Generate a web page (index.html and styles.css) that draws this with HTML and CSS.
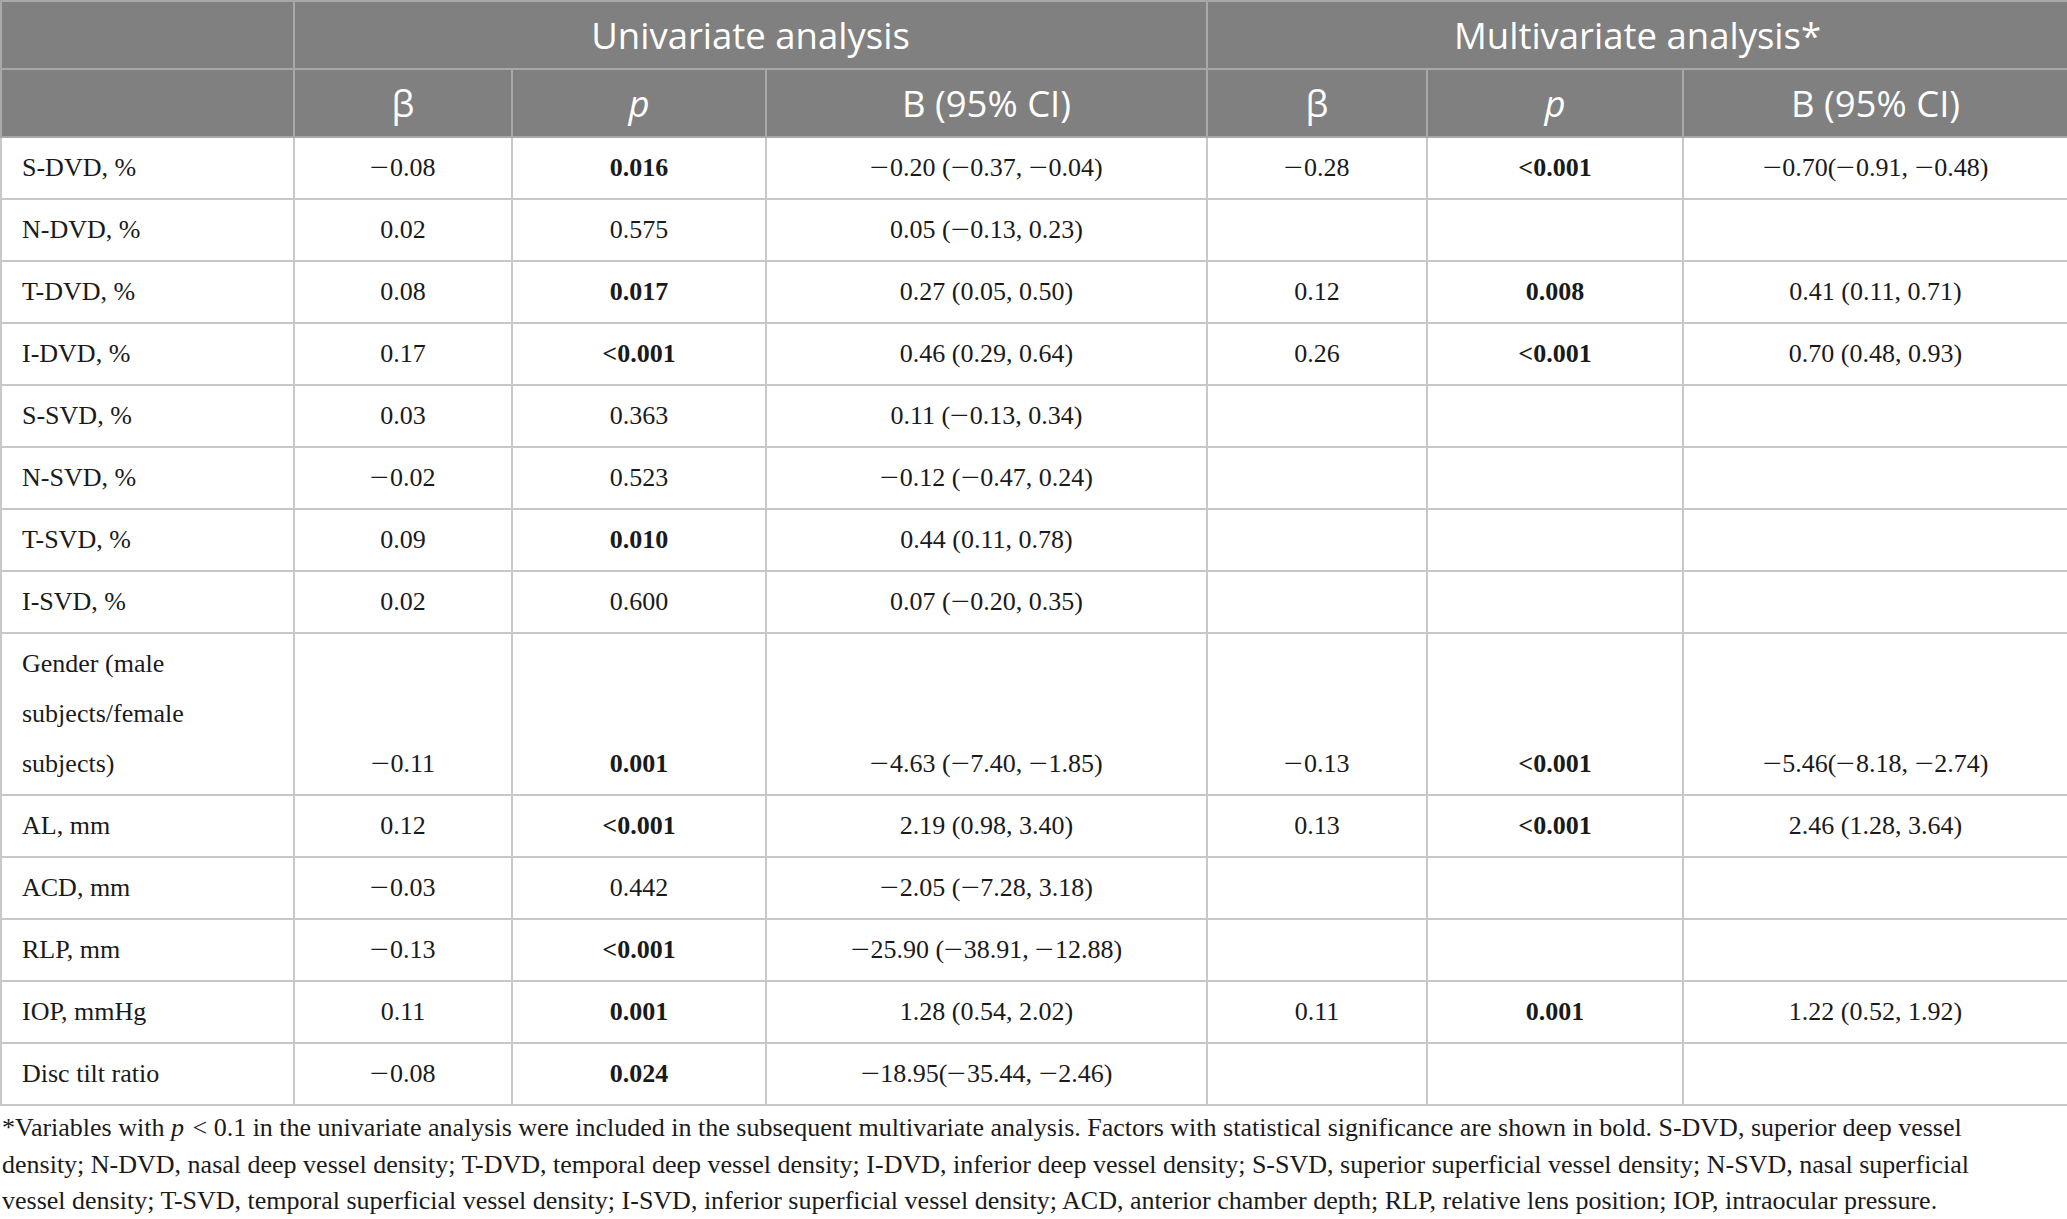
FILE: index.html
```html
<!DOCTYPE html>
<html>
<head>
<meta charset="utf-8">
<link rel="stylesheet" href="styles.css">
</head>
<body>
<table class="data">
  <colgroup>
    <col class="c-var"><col class="c-b1"><col class="c-p1"><col class="c-ci1">
    <col class="c-b2"><col class="c-p2"><col class="c-ci2">
  </colgroup>
  <thead>
    <tr class="h1">
      <th></th>
      <th colspan="3">Univariate analysis</th>
      <th colspan="3">Multivariate analysis*</th>
    </tr>
    <tr class="h2">
      <th></th>
      <th>β</th><th><i>p</i></th><th>B (95% CI)</th>
      <th>β</th><th><i>p</i></th><th>B (95% CI)</th>
    </tr>
  </thead>
  <tbody>
    <tr><td>S-DVD, %</td><td><span class="m">−</span>0.08</td><td><b>0.016</b></td><td><span class="m">−</span>0.20 (<span class="m">−</span>0.37, <span class="m">−</span>0.04)</td><td><span class="m">−</span>0.28</td><td><b>&lt;0.001</b></td><td><span class="m">−</span>0.70(<span class="m">−</span>0.91, <span class="m">−</span>0.48)</td></tr>
    <tr><td>N-DVD, %</td><td>0.02</td><td>0.575</td><td>0.05 (<span class="m">−</span>0.13, 0.23)</td><td></td><td></td><td></td></tr>
    <tr><td>T-DVD, %</td><td>0.08</td><td><b>0.017</b></td><td>0.27 (0.05, 0.50)</td><td>0.12</td><td><b>0.008</b></td><td>0.41 (0.11, 0.71)</td></tr>
    <tr><td>I-DVD, %</td><td>0.17</td><td><b>&lt;0.001</b></td><td>0.46 (0.29, 0.64)</td><td>0.26</td><td><b>&lt;0.001</b></td><td>0.70 (0.48, 0.93)</td></tr>
    <tr><td>S-SVD, %</td><td>0.03</td><td>0.363</td><td>0.11 (<span class="m">−</span>0.13, 0.34)</td><td></td><td></td><td></td></tr>
    <tr><td>N-SVD, %</td><td><span class="m">−</span>0.02</td><td>0.523</td><td><span class="m">−</span>0.12 (<span class="m">−</span>0.47, 0.24)</td><td></td><td></td><td></td></tr>
    <tr><td>T-SVD, %</td><td>0.09</td><td><b>0.010</b></td><td>0.44 (0.11, 0.78)</td><td></td><td></td><td></td></tr>
    <tr><td>I-SVD, %</td><td>0.02</td><td>0.600</td><td>0.07 (<span class="m">−</span>0.20, 0.35)</td><td></td><td></td><td></td></tr>
    <tr><td>Gender (male subjects/female subjects)</td><td><span class="m">−</span>0.11</td><td><b>0.001</b></td><td><span class="m">−</span>4.63 (<span class="m">−</span>7.40, <span class="m">−</span>1.85)</td><td><span class="m">−</span>0.13</td><td><b>&lt;0.001</b></td><td><span class="m">−</span>5.46(<span class="m">−</span>8.18, <span class="m">−</span>2.74)</td></tr>
    <tr><td>AL, mm</td><td>0.12</td><td><b>&lt;0.001</b></td><td>2.19 (0.98, 3.40)</td><td>0.13</td><td><b>&lt;0.001</b></td><td>2.46 (1.28, 3.64)</td></tr>
    <tr><td>ACD, mm</td><td><span class="m">−</span>0.03</td><td>0.442</td><td><span class="m">−</span>2.05 (<span class="m">−</span>7.28, 3.18)</td><td></td><td></td><td></td></tr>
    <tr><td>RLP, mm</td><td><span class="m">−</span>0.13</td><td><b>&lt;0.001</b></td><td><span class="m">−</span>25.90 (<span class="m">−</span>38.91, <span class="m">−</span>12.88)</td><td></td><td></td><td></td></tr>
    <tr><td>IOP, mmHg</td><td>0.11</td><td><b>0.001</b></td><td>1.28 (0.54, 2.02)</td><td>0.11</td><td><b>0.001</b></td><td>1.22 (0.52, 1.92)</td></tr>
    <tr><td>Disc tilt ratio</td><td><span class="m">−</span>0.08</td><td><b>0.024</b></td><td><span class="m">−</span>18.95(<span class="m">−</span>35.44, <span class="m">−</span>2.46)</td><td></td><td></td><td></td></tr>
  </tbody>
</table>
<p class="note">*Variables with <i>p</i> &lt; 0.1 in the univariate analysis were included in the subsequent multivariate analysis. Factors with statistical significance are shown in bold. S-DVD, superior deep vessel density; N-DVD, nasal deep vessel density; T-DVD, temporal deep vessel density; I-DVD, inferior deep vessel density; S-SVD, superior superficial vessel density; N-SVD, nasal superficial vessel density; T-SVD, temporal superficial vessel density; I-SVD, inferior superficial vessel density; ACD, anterior chamber depth; RLP, relative lens position; IOP, intraocular pressure.</p>
</body>
</html>
```
FILE: styles.css
```css
html, body {
  margin: 0;
  padding: 0;
  background: #ffffff;
}

.data {
  width: 2067px;
  border-collapse: collapse;
  table-layout: fixed;
  font-family: "Liberation Serif", "Times New Roman", serif;
  color: #1a1a1a;
}

.c-var { width: 293px; }
.c-b1 { width: 218px; }
.c-p1 { width: 254px; }
.c-ci1 { width: 441px; }
.c-b2 { width: 220px; }
.c-p2 { width: 256px; }
.c-ci2 { width: 385px; }

.data th {
  background: #808080;
  color: #ffffff;
  font-family: "Open Sans", "Noto Sans", sans-serif;
  font-weight: 400;
  font-size: 36.5px;
  height: 66px;
  padding: 0;
  border: 2px solid #a8a8a8;
  text-align: center;
  vertical-align: middle;
}

.data th i {
  font-style: italic;
}

.data td {
  font-size: 26px;
  line-height: 50px;
  padding: 5px 10px;
  border: 2px solid #c8c8c8;
  text-align: center;
  vertical-align: bottom;
}

.data td:first-child {
  text-align: left;
  padding-left: 20px;
  padding-right: 24px;
}

.data td b {
  font-weight: 700;
}

.m {
  display: inline-block;
  transform: scaleX(1.3);
  transform-origin: left center;
  margin-right: 5px;
}

.note {
  width: 2005px;
  margin: 0;
  padding: 4px 0 0 2px;
  font-family: "Liberation Serif", "Times New Roman", serif;
  font-size: 26px;
  line-height: 36.5px;
  color: #1a1a1a;
}

.note i {
  padding-right: 2px;
}
```
